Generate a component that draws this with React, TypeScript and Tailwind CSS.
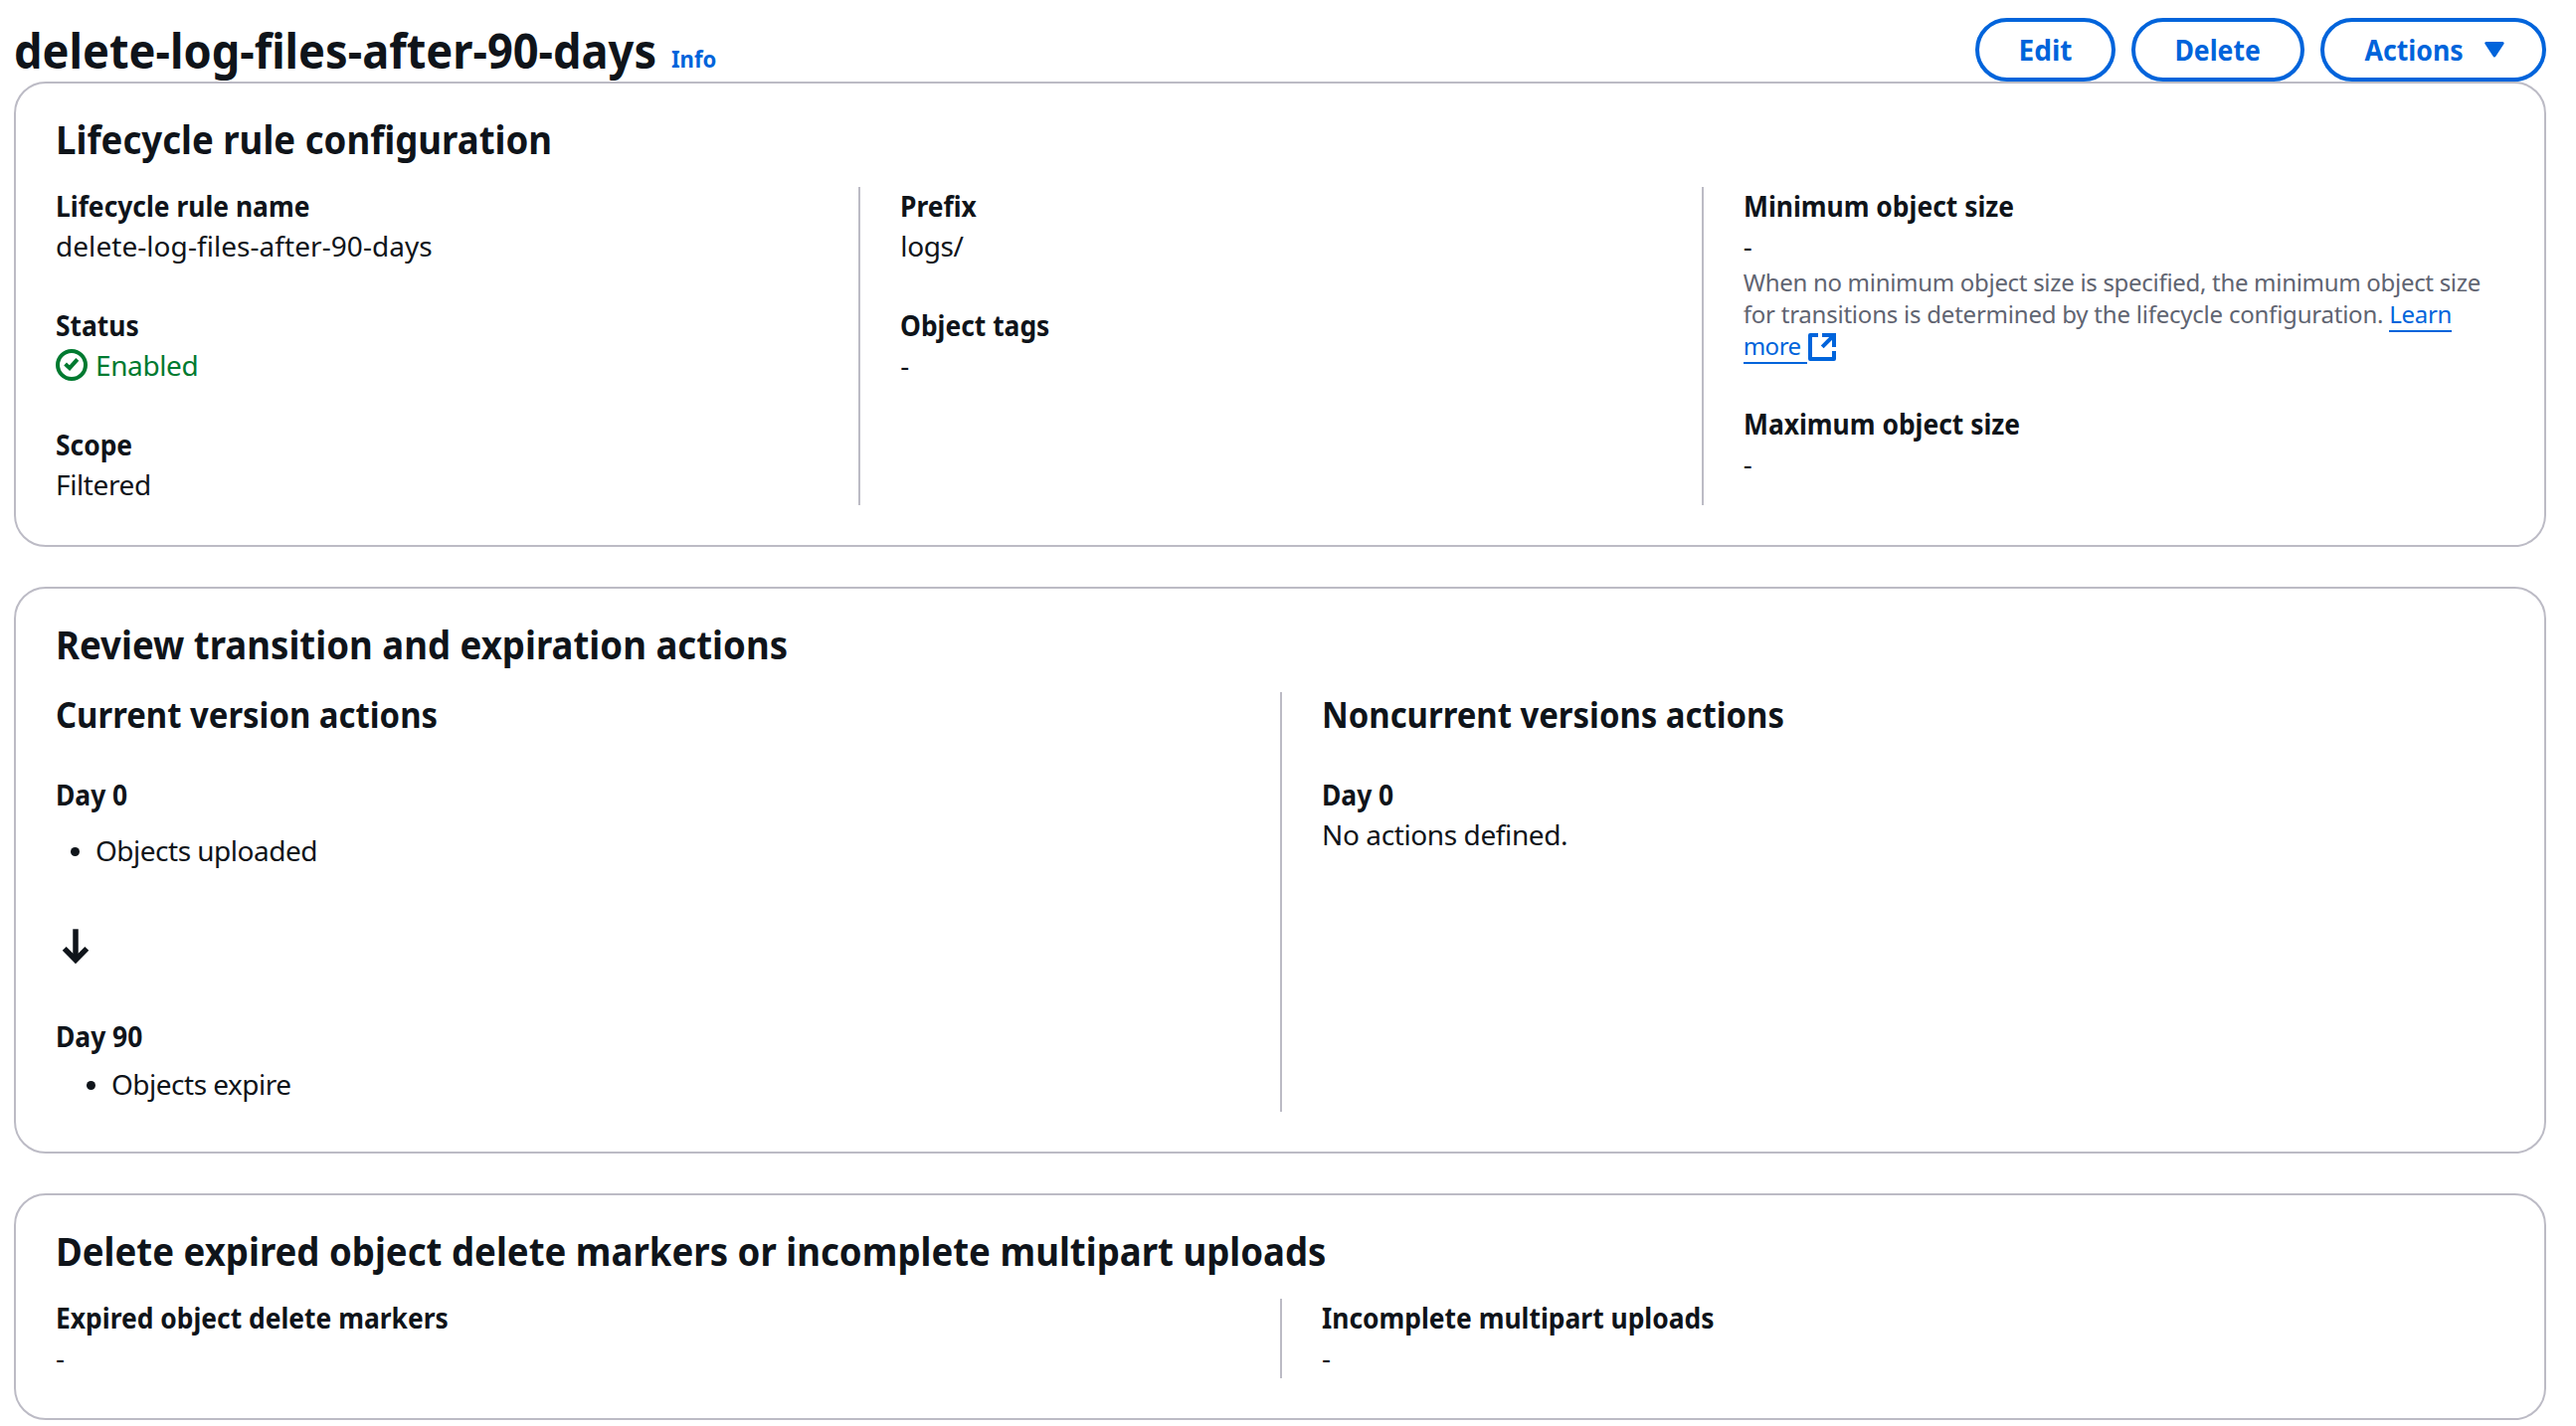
import type { ReactNode } from 'react';

function CardTitle({ children }: { children: ReactNode }) {
  return (
    <h2 className="ml-10 h-[104px] w-fit origin-left scale-x-[0.9145] pt-7 text-[40px] leading-[56px] font-bold whitespace-nowrap">
      {children}
    </h2>
  );
}

function Card({ title, className, children }: { title: string; className: string; children: ReactNode }) {
  return (
    <section className={`rounded-[32px] border-2 border-[#bcbbc5] bg-white pb-10 ${className}`}>
      <CardTitle>{title}</CardTitle>
      {children}
    </section>
  );
}

function Column({ first, children }: { first?: boolean; children: ReactNode }) {
  return (
    <div className={first ? 'pl-10' : 'border-l-2 border-[#bcbbc5] pl-10'}>
      <div className="-mt-px flex flex-col gap-10 pb-px">{children}</div>
    </div>
  );
}

function ColumnTitle({ children }: { children: ReactNode }) {
  return <h3 className="w-fit origin-left scale-x-[0.913] text-[36px] leading-[48px] font-bold whitespace-nowrap">{children}</h3>;
}

function Label({ children }: { children: ReactNode }) {
  return <div className="w-fit origin-left scale-x-[0.943] text-[28px] leading-10 font-bold whitespace-nowrap">{children}</div>;
}

function Field({ label, children }: { label: string; children: ReactNode }) {
  return (
    <div>
      <Label>{label}</Label>
      <div className="text-[28px] leading-10 tracking-[-0.014em]">{children}</div>
    </div>
  );
}

function Button({ width, children }: { width: string; children: ReactNode }) {
  return (
    <button className={`flex h-16 items-center justify-center rounded-full border-4 border-[#0064db] pb-px text-[28px] leading-10 font-bold text-[#0064db] ${width}`}>
      {children}
    </button>
  );
}

function CheckIcon() {
  return (
    <svg className="size-8 shrink-0" viewBox="0 0 16 16" fill="none" stroke="currentColor" strokeWidth="2">
      <circle cx="8" cy="8" r="7" />
      <path d="M4.8 7.5 7 9.6 10.9 5.2" />
    </svg>
  );
}

function ExternalIcon() {
  return (
    <svg className="-mt-[3px] -ml-px inline-block size-8 align-middle" viewBox="0 0 16 16" fill="none" stroke="currentColor" strokeWidth="2">
      <path d="M8 2h6v6M14 2 8.1 7.9" />
      <path strokeLinejoin="round" d="M14 10v4H2V2h4" />
    </svg>
  );
}

function DownArrow() {
  return (
    <svg className="size-10" viewBox="0 0 40 40" fill="none" stroke="currentColor" strokeWidth="5.5">
      <path d="M20 2.3V33" />
      <path d="M8.7 21.9 20 33.3l11.3-11.4" />
    </svg>
  );
}

function Bullet({ children, className }: { children: ReactNode; className: string }) {
  return (
    <div className={`flex items-center gap-4 text-[28px] leading-10 tracking-[-0.018em] ${className}`}>
      <span className="mt-[3px] size-[9px] rounded-full bg-[#0f141a]" />
      {children}
    </div>
  );
}

export default function App() {
  return (
    <div className="h-[1434px] overflow-hidden bg-white pl-[14px] pr-[30px] font-['Noto_Sans',sans-serif] text-[#0f141a]">
      <header className="flex h-[82px] items-start justify-between">
        <div className="flex items-baseline pt-[19px]">
          <h1 className="w-[661px] origin-left scale-x-[0.941] text-[48px] leading-[64px] font-bold whitespace-nowrap">delete-log-files-after-90-days</h1>
          <a className="relative -top-px origin-left scale-x-[0.92] text-[24px] leading-8 font-bold text-[#0064db]">Info</a>
        </div>
        <div className="flex gap-4 pt-[18px]">
          <Button width="w-[141px]">Edit</Button>
          <Button width="w-[174px]">
            <span className="scale-x-[0.947]">Delete</span>
          </Button>
          <Button width="w-[227px]">
            <span className="scale-x-[0.953]">Actions</span>
            <svg className="ml-[18px] h-4 w-5" viewBox="0 0 20 16" fill="currentColor" stroke="currentColor" strokeWidth="3" strokeLinejoin="round">
              <path d="M1.8 1.5h16.4L10 14z" />
            </svg>
          </Button>
        </div>
      </header>

      <Card title="Lifecycle rule configuration" className="h-[468px]">
        <div className="grid h-80 grid-cols-3">
          <Column first>
            <Field label="Lifecycle rule name">
              <span className="tracking-[0.002em]">delete-log-files-after-90-days</span>
            </Field>
            <Field label="Status">
              <span className="flex items-center gap-2 text-[#007a30]">
                <CheckIcon />
                Enabled
              </span>
            </Field>
            <Field label="Scope">Filtered</Field>
          </Column>
          <Column>
            <Field label="Prefix">logs/</Field>
            <Field label="Object tags">-</Field>
          </Column>
          <Column>
            <div>
              <Field label="Minimum object size">-</Field>
              <p className="h-[99px] w-[764px] pt-px text-[24px] leading-8 tracking-[-0.0125em] text-[#5f6471]">
                When no minimum object size is specified, the minimum object size
                <br />
                <span className="tracking-[-0.0093em]">for transitions is determined by the lifecycle configuration. </span>
                <a className="text-[#0064db]">
                  <span className="border-b-2 border-[#0064db]">Learn</span>
                  <br />
                  <span className="border-b-2 border-[#0064db] pr-[6px] tracking-[-0.02em]">more</span>
                  <ExternalIcon />
                </a>
              </p>
            </div>
            <Field label="Maximum object size">-</Field>
          </Column>
        </div>
      </Card>

      <Card title="Review transition and expiration actions" className="mt-10 h-[570px]">
        <div className="grid h-[422px] grid-cols-2">
          <Column first>
            <div>
              <ColumnTitle>Current version actions</ColumnTitle>
              <div className="mt-9">
                <Label>Day 0</Label>
              </div>
              <Bullet className="mt-4 pl-[15px]">Objects uploaded</Bullet>
              <div className="mt-[57px]">
                <DownArrow />
              </div>
              <div className="mt-[50px]">
                <Label>Day 90</Label>
              </div>
              <Bullet className="mt-2 pl-[31px]">Objects expire</Bullet>
            </div>
          </Column>
          <Column>
            <div>
              <ColumnTitle>Noncurrent versions actions</ColumnTitle>
              <div className="mt-9">
                <Field label="Day 0">No actions defined.</Field>
              </div>
            </div>
          </Column>
        </div>
      </Card>

      <Card title="Delete expired object delete markers or incomplete multipart uploads" className="mt-10 h-[228px]">
        <div className="grid h-20 grid-cols-2">
          <Column first>
            <Field label="Expired object delete markers">-</Field>
          </Column>
          <Column>
            <Field label="Incomplete multipart uploads">-</Field>
          </Column>
        </div>
      </Card>
    </div>
  );
}
